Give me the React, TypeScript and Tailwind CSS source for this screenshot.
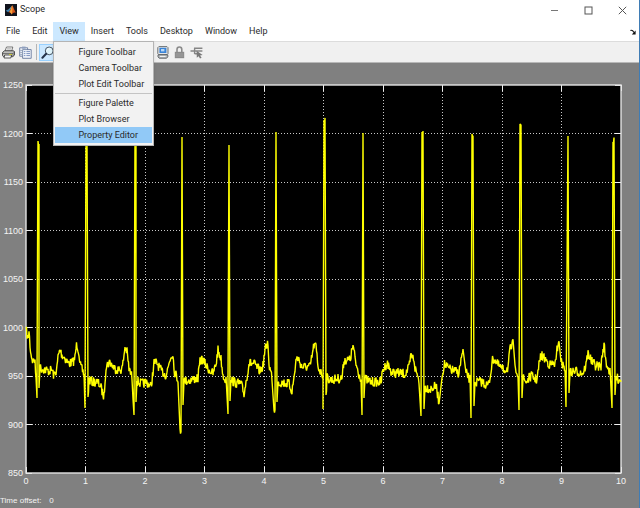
import { type ReactNode } from "react";

const menus = ["File", "Edit", "View", "Insert", "Tools", "Desktop", "Window", "Help"];

const viewItems = [
  ["Figure Toolbar", "Camera Toolbar", "Plot Edit Toolbar"],
  ["Figure Palette", "Plot Browser", "Property Editor"],
];

const yTicks = [1250, 1200, 1150, 1100, 1050, 1000, 950, 900, 850];
const xTicks = [0, 1, 2, 3, 4, 5, 6, 7, 8, 9, 10];

// plot area inside the chart viewBox
const LEFT = 26;
const RIGHT = 621;
const TOP = 22;
const BOTTOM = 410;

const xPos = (t: number) => LEFT + (t / 10) * (RIGHT - LEFT);
const yPos = (v: number) => BOTTOM - ((v - 850) / 400) * (BOTTOM - TOP);

// anchor points of the ECG trace, the quiet parts get noise added below
const trace: [number, number][] = [
  [26, 266], [28, 277], [29, 268], [30, 282], [31, 291], [33, 299], [34, 295], [35, 301], [36, 315],
  [37, 335], [37, 315], [38, 78], [39, 78], [39, 325], [40, 305], [44, 306], [48, 308], [52, 307], [54, 313],
  [56, 308], [57, 305], [58, 294], [60, 287], [62, 292], [65, 295], [68, 300], [71, 300], [73, 299],
  [75, 295], [76, 285], [77, 281], [79, 289], [80, 302], [82, 307], [84, 311], [85, 345], [86, 77],
  [87, 77], [88, 334], [89, 317], [93, 319], [97, 319], [100, 322], [102, 328], [104, 334], [105, 317],
  [106, 303], [110, 299], [114, 305], [119, 307], [122, 306], [123, 300], [125, 284], [127, 289],
  [129, 306], [132, 314], [133, 332], [134, 352], [135, 72], [136, 72], [136, 339], [137, 318], [142, 321],
  [147, 319], [151, 324], [153, 309], [154, 300], [157, 300], [161, 308], [166, 312], [168, 305],
  [170, 296], [173, 289], [174, 307], [178, 317], [180, 366], [181, 366], [182, 74], [183, 342], [184, 318],
  [190, 317], [198, 315], [200, 299], [202, 296], [207, 304], [213, 311], [216, 301], [218, 287],
  [221, 296], [223, 312], [226, 317], [228, 351], [228, 320], [229, 82], [230, 338], [231, 317], [236, 320],
  [241, 321], [244, 331], [247, 313], [249, 300], [254, 301], [260, 308], [263, 303], [265, 287],
  [268, 279], [269, 302], [272, 314], [274, 347], [275, 345], [276, 69], [277, 339], [278, 319], [284, 320],
  [289, 321], [292, 328], [294, 315], [296, 297], [298, 295], [302, 304], [310, 304], [311, 299],
  [314, 282], [316, 284], [318, 303], [321, 310], [323, 312], [323, 346], [324, 57], [325, 57], [326, 332],
  [327, 315], [331, 317], [336, 316], [342, 315], [344, 297], [350, 297], [353, 283], [356, 301],
  [359, 311], [361, 315], [362, 352], [363, 70], [364, 335], [365, 316], [371, 319], [377, 319],
  [381, 319], [383, 307], [387, 300], [392, 310], [398, 310], [405, 311], [409, 305], [411, 293],
  [414, 296], [415, 305], [419, 317], [421, 353], [422, 69], [423, 69], [424, 346], [425, 324], [431, 326],
  [436, 323], [439, 339], [442, 315], [444, 301], [449, 306], [454, 308], [459, 310], [461, 297],
  [463, 289], [466, 310], [470, 317], [471, 355], [472, 71], [473, 71], [474, 343], [475, 319], [482, 319],
  [488, 323], [490, 315], [492, 299], [494, 295], [498, 302], [503, 307], [508, 305], [510, 287],
  [513, 281], [515, 302], [518, 311], [519, 347], [520, 61], [521, 61], [522, 335], [523, 315], [526, 319],
  [531, 313], [537, 317], [539, 302], [541, 292], [546, 297], [550, 302], [556, 300], [557, 287],
  [559, 275], [561, 299], [565, 306], [566, 344], [568, 73], [568, 73], [569, 330], [570, 310], [575, 308],
  [583, 310], [586, 302], [588, 290], [592, 299], [596, 303], [601, 303], [603, 287], [604, 282],
  [606, 299], [610, 310], [612, 345], [613, 79], [614, 79], [615, 332], [616, 315], [621, 317],
];

const buildTrace = () => {
  const out = [trace[0].join(",")];
  let seed = 7;
  const noise = () => {
    seed = (seed * 16807) % 2147483647;
    return (seed / 2147483647 - 0.5) * 10;
  };
  for (let i = 1; i < trace.length; i++) {
    const [x0, y0] = trace[i - 1];
    const [x1, y1] = trace[i];
    if (Math.abs(y1 - y0) < 20) {
      const steps = Math.max(1, Math.round((x1 - x0) / 0.5));
      for (let s = 1; s <= steps; s++) {
        const x = x0 + ((x1 - x0) * s) / steps;
        const y = y0 + ((y1 - y0) * s) / steps + noise();
        out.push(`${x.toFixed(1)},${y.toFixed(1)}`);
      }
    } else {
      out.push(`${x1},${y1}`);
    }
  }
  return out.join(" ");
};

const MatlabLogo = () => (
  <svg viewBox="0 0 12 12" className="size-3 shrink-0">
    <rect width="12" height="12" fill="#10131c" />
    <path d="M0.6 6.8 L3.6 5.2 L5.2 6.3 L3.3 8.2 Z" fill="#3f7fae" />
    <path d="M3.6 5.2 C5 4.6 5.8 2.4 7.2 1.4 L5.2 6.3 Z" fill="#67a7c4" />
    <path d="M7.2 1.2 C8.4 2.6 9.4 7 11.4 9 C9.6 8.2 8.4 8.4 6.6 10.6 C6.2 9 5.2 8 3.6 8.3 C5.6 6.8 6.2 3 7.2 1.2 Z" fill="#d9581c" />
    <path d="M7.2 1.2 C7.7 3.6 7.6 7.4 6.6 10.6 C6.2 9.2 5.4 8.3 4.4 8 C6 6.4 6.4 3 7.2 1.2 Z" fill="#f2a13c" />
  </svg>
);

const PrintIcon = () => (
  <svg viewBox="0 0 13 13" className="size-[13px]">
    <path d="M4.5 1 H10.8 L9.6 5.2 H3 Z" fill="#fff" stroke="#555" strokeWidth="0.8" />
    <path d="M5 2.6 H9.4 M4.6 3.9 H9" stroke="#999" strokeWidth="0.6" />
    <path d="M0.6 6.4 L2.6 4.8 H11.6 L12.6 6 V9 L10.8 10.6 H1.4 L0.6 9.6 Z" fill="#c9c9c6" stroke="#333" strokeWidth="0.9" />
    <path d="M1 7.4 H11 L12.4 6.2 M11 7.4 V10" stroke="#444" strokeWidth="0.7" fill="none" />
    <path d="M2.6 9 H9.6 L8.8 12 H2 Z" fill="#f4f4f4" stroke="#333" strokeWidth="0.8" />
    <rect x="7" y="8" width="3" height="1" fill="#c8c832" />
  </svg>
);

const PropertiesIcon = () => (
  <svg viewBox="0 0 13 13" className="size-[13px]">
    <path d="M0.7 1.8 H8.6 V3.6 H12.2 V12.3 H3.6 V10.2 H0.7 Z" fill="#f4f7fc" stroke="#66789c" strokeWidth="0.9" />
    <path d="M3.6 10.2 V3.6 H9" fill="none" stroke="#66789c" strokeWidth="0.8" />
    <rect x="3" y="0.6" width="3.6" height="2" fill="#8fa0bf" />
    <path d="M1.4 4.4 H2.8 M1.4 6.4 H2.8 M1.4 8.4 H2.8" stroke="#66789c" strokeWidth="0.8" />
    <path d="M4.8 5.6 H6.4 M7.4 5.6 H11 M4.8 7.6 H6.4 M7.4 7.6 H11 M4.8 9.6 H6.4 M7.4 9.6 H11" stroke="#6d86b8" strokeWidth="0.9" />
  </svg>
);

const ZoomIcon = () => (
  <svg viewBox="0 0 13 13" className="size-[13px]">
    <circle cx="8.2" cy="4.9" r="3.9" fill="#dff4fb" stroke="#4a5563" strokeWidth="1" />
    <path d="M6 4.6 A2.4 2.4 0 0 1 8 2.6" stroke="#fff" strokeWidth="1" fill="none" />
    <path d="M5.2 7.8 L1.4 11.8" stroke="#26334a" strokeWidth="2" strokeLinecap="round" />
  </svg>
);

const ScopeIcon = () => (
  <svg viewBox="0 0 12 13" className="h-[13px] w-3">
    <path d="M1.8 0.6 H10 L11 1.6 V7.6 L10 8.6 H1.8 L0.8 7.6 V1.6 Z" fill="#e4e4e4" stroke="#6d7276" strokeWidth="1" />
    <rect x="2.4" y="1.8" width="7" height="5.2" fill="#3a84d8" />
    <rect x="4" y="3" width="3.4" height="2.4" fill="#b9d8f5" />
    <path d="M1 8.8 H10.8 V10.8 L9.6 12.2 H2.2 L1 10.8 Z" fill="#b9bcbf" stroke="#55595d" strokeWidth="0.9" />
    <path d="M3 10.4 H8.6" stroke="#fff" strokeWidth="0.9" />
  </svg>
);

const LockIcon = () => (
  <svg viewBox="0 0 11 13" className="h-[13px] w-[11px]">
    <path d="M3 6 V3.4 A2.4 2.4 0 0 1 7.8 3.4 V6" fill="none" stroke="#8a8a8a" strokeWidth="1.6" />
    <rect x="0.8" y="5.8" width="9.4" height="6.4" fill="#8a8a8a" />
    <path d="M1.6 8 H9.4 M1.6 10 H9.4" stroke="#a9a9a9" strokeWidth="0.7" />
  </svg>
);

const SignalIcon = () => (
  <svg viewBox="0 0 13 13" className="size-[13px]">
    <path d="M0.5 5 H4 M4 2.2 H12.4 M4.6 2.2 V8 M4.6 7.8 H7 M4.6 5 H12.4" fill="none" stroke="#858585" strokeWidth="1.4" />
    <path d="M6.6 4.8 L12.6 9 L10 9.4 L11.6 11.8 L10 12.6 L8.6 10.2 L6.8 11.8 Z" fill="#777" />
  </svg>
);

const ToolButton = ({ label, active, children }: { label: string; active?: boolean; children: ReactNode }) => (
  <button
    type="button"
    aria-label={label}
    className={`flex h-[17px] w-[17px] items-center justify-center ${active ? "border border-[#99d1ff] bg-[#cce8ff]" : ""}`}
  >
    {children}
  </button>
);

const ViewMenu = () => (
  <div className="absolute top-full left-0 z-10 w-[101px] border border-[#b4b4b4] bg-[#f2f2f2] px-px py-0.5 shadow-sm">
    {viewItems.map((group, i) => (
      <div key={i} className={i > 0 ? "mt-px border-t border-[#c4c4c4] pt-px" : ""}>
        {group.map((item) => (
          <button
            key={item}
            type="button"
            className={`block h-4 w-full pl-[23px] text-left leading-4 whitespace-nowrap ${item === "Property Editor" ? "bg-[#91c9f7]" : ""}`}
          >
            {item}
          </button>
        ))}
      </div>
    ))}
  </div>
);

const Chart = () => (
  <svg viewBox="0 0 639 430" className="block w-full" role="img" aria-label="Scope">
    <rect x={LEFT} y={TOP} width={RIGHT - LEFT} height={BOTTOM - TOP} fill="#000" />
    <g stroke="#c8c8c8" strokeWidth="1" strokeDasharray="1 2" shapeRendering="crispEdges">
      {yTicks.slice(1, -1).map((v) => (
        <line key={v} x1={LEFT} x2={RIGHT} y1={yPos(v)} y2={yPos(v)} />
      ))}
      {xTicks.slice(1, -1).map((t) => (
        <line key={t} x1={xPos(t)} x2={xPos(t)} y1={TOP} y2={BOTTOM} />
      ))}
    </g>
    <g stroke="#f0f0f0" strokeWidth="1" shapeRendering="crispEdges">
      {yTicks.map((v) => (
        <path key={v} d={`M${LEFT} ${yPos(v)} h6 M${RIGHT} ${yPos(v)} h-6`} />
      ))}
      {xTicks.map((t) => (
        <path key={t} d={`M${xPos(t)} ${BOTTOM} v-6 M${xPos(t)} ${TOP} v6`} />
      ))}
    </g>
    <rect x={LEFT} y={TOP} width={RIGHT - LEFT} height={BOTTOM - TOP} fill="none" stroke="#e4e4e4" strokeWidth="1.4" />
    <polyline points={buildTrace()} fill="none" stroke="#ffff00" strokeWidth="1.4" strokeLinejoin="bevel" />
    <g fill="#f4f4f4" fontSize="9" fontFamily="'Liberation Sans', Arial, sans-serif">
      {yTicks.map((v) => (
        <text key={v} x="23" y={yPos(v) + 3} textAnchor="end">
          {v}
        </text>
      ))}
      {xTicks.map((t) => (
        <text key={t} x={xPos(t)} y={BOTTOM + 11} textAnchor="middle">
          {t}
        </text>
      ))}
    </g>
  </svg>
);

const App = () => {
  return (
    <div className="flex min-h-screen flex-col border-r border-[#3f7cb5] bg-[#808080] font-[Roboto,'Noto_Sans',sans-serif] text-[9px] text-[#2a2a2a]">
      <header className="flex h-5 items-center bg-white pl-[5px]">
        <MatlabLogo />
        <h1 className="ml-[3px] flex-1">Scope</h1>
        <button type="button" aria-label="Minimize" className="flex h-5 w-[34px] items-center justify-center">
          <svg viewBox="0 0 9 9" className="size-[9px]">
            <path d="M1 4.5 H8" stroke="#777" />
          </svg>
        </button>
        <button type="button" aria-label="Maximize" className="flex h-5 w-[34px] items-center justify-center">
          <svg viewBox="0 0 9 9" className="size-[9px]">
            <rect x="1" y="1" width="7" height="7" fill="none" stroke="#555" />
          </svg>
        </button>
        <button type="button" aria-label="Close" className="flex h-5 w-[34px] items-center justify-center">
          <svg viewBox="0 0 9 9" className="size-[9px]">
            <path d="M0.8 0.8 L8.2 8.2 M8.2 0.8 L0.8 8.2" stroke="#555" />
          </svg>
        </button>
      </header>

      <nav className="flex h-[21px] items-end bg-white">
        {menus.map((menu) => (
          <div key={menu} className="relative">
            <button type="button" className={`h-[19px] px-1.5 ${menu === "View" ? "bg-[#cce8ff]" : ""}`}>
              {menu}
            </button>
            {menu === "View" && <ViewMenu />}
          </div>
        ))}
        <button type="button" aria-label="Dock" className="mr-[3px] ml-auto flex h-[19px] items-center">
          <svg viewBox="0 0 6 6" className="size-1.5">
            <path d="M0.4 1.4 C2 0.8 3 1.6 4 3.4" fill="none" stroke="#111" strokeWidth="1.1" />
            <path d="M5.6 1.6 V5.6 H1.8 Z" fill="#111" />
          </svg>
        </button>
      </nav>

      <div className="flex h-[22px] items-center border-t border-b border-t-[#dcdcdc] border-b-[#b8b8b8] bg-[#f0f0f0]">
        <ToolButton label="Print">
          <PrintIcon />
        </ToolButton>
        <ToolButton label="Parameters">
          <PropertiesIcon />
        </ToolButton>
        <span className="mx-0.5 h-4 w-px bg-[#b5b5b5]" />
        <ToolButton label="Zoom" active>
          <ZoomIcon />
        </ToolButton>
        <div className="ml-[98px] flex">
          <ToolButton label="Floating scope">
            <ScopeIcon />
          </ToolButton>
          <ToolButton label="Lock axes">
            <LockIcon />
          </ToolButton>
          <ToolButton label="Signal selection">
            <SignalIcon />
          </ToolButton>
        </div>
      </div>

      <main>
        <Chart />
      </main>

      <footer className="flex h-4 items-center gap-2 font-['Liberation_Sans',Arial,sans-serif] text-[8px] text-[#f4f4f4]">
        <span>Time offset:</span>
        <span>0</span>
      </footer>
    </div>
  );
};

export default App;
